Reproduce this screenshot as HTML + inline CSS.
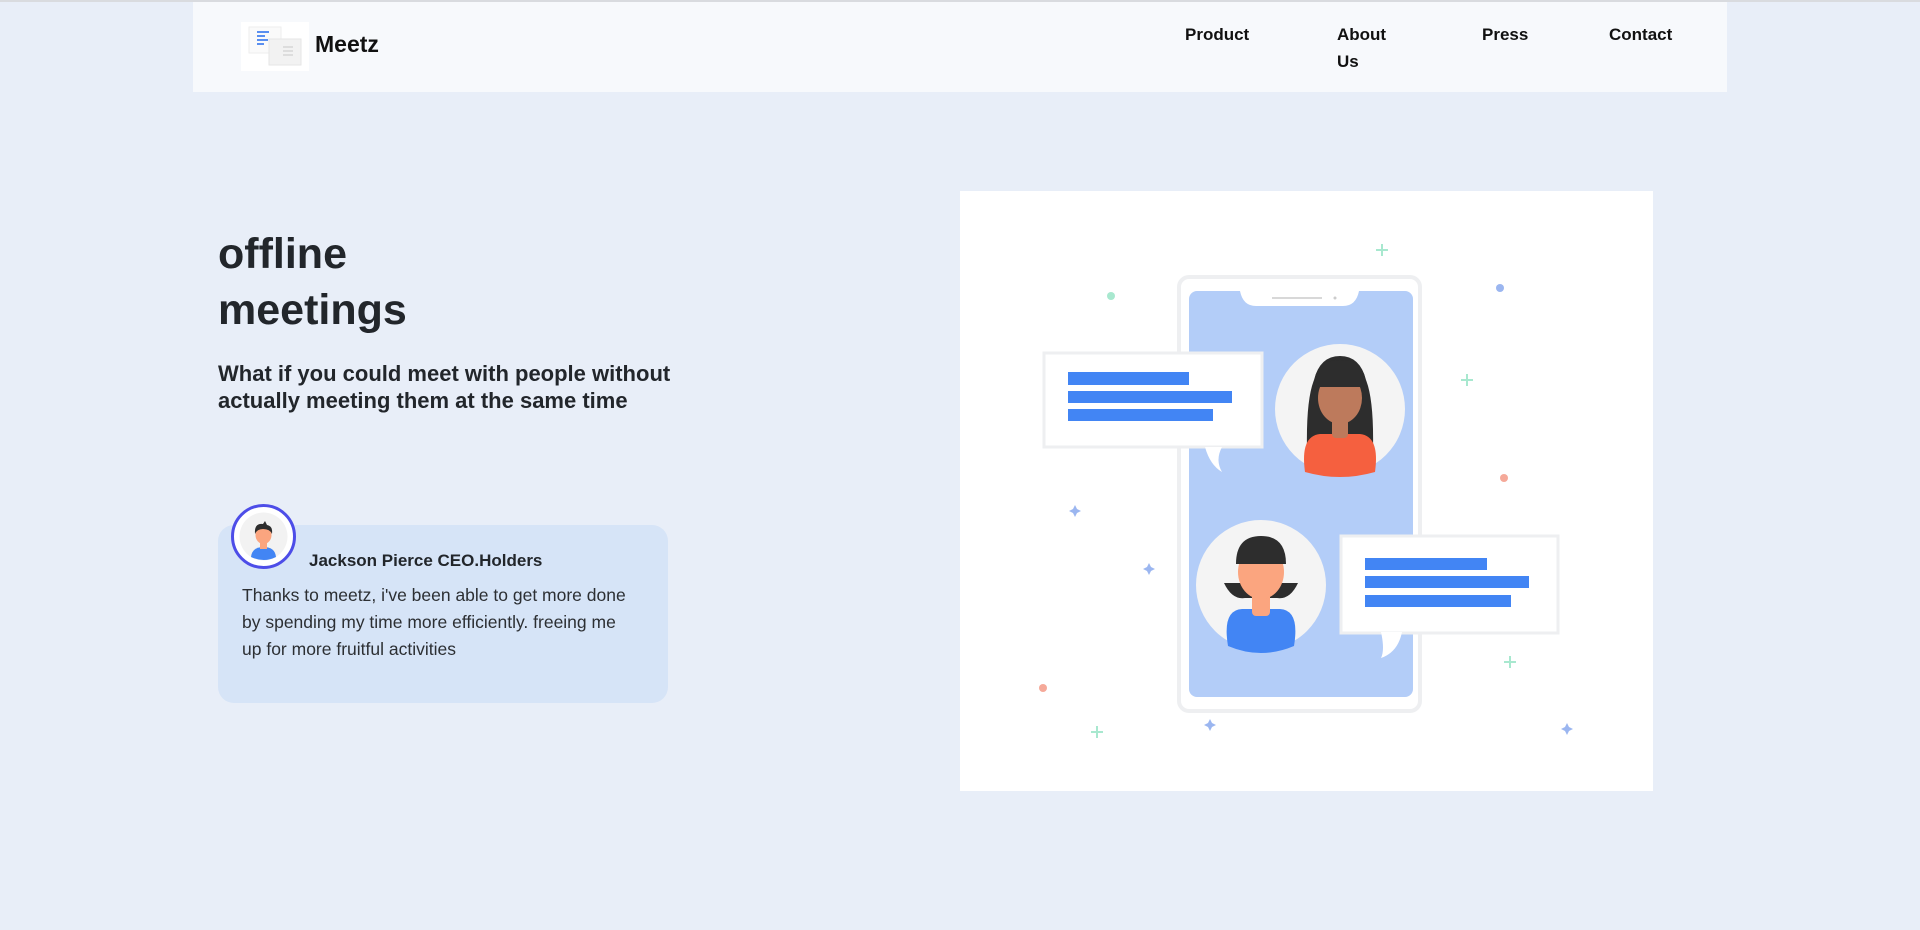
<!DOCTYPE html>
<html><head><meta charset="utf-8"><style>
*{margin:0;padding:0;box-sizing:border-box}
body{width:1920px;height:930px;background:#e8eef8;font-family:"Liberation Sans",sans-serif;position:relative;overflow:hidden;color:#1f2329}
.topline{position:absolute;left:0;top:0;width:1920px;height:2px;background:#d9dbdf}
header{position:absolute;left:193px;top:2px;width:1534px;height:90px;background:#f7f9fc}
.logo{position:absolute;left:48px;top:20px;width:68px;height:49px;background:#fff}
.brand{position:absolute;left:122px;top:29px;font-size:23px;font-weight:bold;color:#111}
.nav{position:absolute;top:19px;font-size:17px;font-weight:bold;color:#111;line-height:27px}
h1{position:absolute;left:218px;top:226px;font-size:43px;font-weight:bold;line-height:56px;color:#22262b}
.sub{position:absolute;left:218px;top:360px;font-size:22px;font-weight:bold;line-height:27px;color:#22262b}
.card{position:absolute;left:218px;top:525px;width:450px;height:178px;background:#d6e4f7;border-radius:16px}
.av{position:absolute;left:231px;top:504px;width:65px;height:65px;border-radius:50%;border:3px solid #4d4de8;background:#fff;overflow:hidden}
.name{position:absolute;left:309px;top:551px;font-size:17px;font-weight:bold;color:#22262b}
.quote{position:absolute;left:242px;top:582px;width:396px;font-size:17.5px;line-height:27px;color:#2c2f33}
.panel{position:absolute;left:960px;top:191px;width:693px;height:600px;background:#fff}
</style></head><body>
<div class="topline"></div>
<header>
<div class="logo"><svg width="68" height="49" viewBox="0 0 68 49">
<rect x="8" y="5" width="32" height="26" fill="#fafafa" stroke="#eee"/>
<rect x="28" y="17" width="32" height="26" fill="#f2f2f2" stroke="#e6e6e6"/>
<rect x="16" y="9" width="12" height="2" fill="#5a8ff0"/><rect x="16" y="13" width="8" height="2" fill="#5a8ff0"/><rect x="16" y="17" width="11" height="2" fill="#5a8ff0"/><rect x="16" y="21" width="7" height="2" fill="#5a8ff0"/>
<rect x="42" y="24" width="10" height="2" fill="#ddd"/><rect x="42" y="28" width="10" height="2" fill="#ddd"/><rect x="42" y="32" width="10" height="2" fill="#ddd"/>
</svg></div>
<div class="brand">Meetz</div>
<div class="nav" style="left:992px">Product</div>
<div class="nav" style="left:1144px">About<br>Us</div>
<div class="nav" style="left:1289px">Press</div>
<div class="nav" style="left:1416px">Contact</div>
</header>
<h1>offline<br>meetings</h1>
<div class="sub">What if you could meet with people without<br>actually meeting them at the same time</div>
<div class="card"></div>
<div class="av"><svg width="59" height="59" viewBox="0 0 59 59">
<circle cx="29.5" cy="29.5" r="24" fill="#f2f2f2"/>
<path d="M17 50 Q18 40 29.5 40 Q41 40 42 50 Q30 56 17 50Z" fill="#4285f4"/>
<rect x="26" y="34" width="7" height="8" fill="#fba57f"/>
<ellipse cx="29.5" cy="28" rx="8" ry="9" fill="#fba57f"/>
<path d="M21 27 Q20 16 29 17 L31 14 L33 18 Q39 19 38 27 Q36 22 29 22 Q23 22 21 27Z" fill="#2d2d2d"/>
</svg></div>
<div class="name">Jackson Pierce CEO.Holders</div>
<div class="quote">Thanks to meetz, i've been able to get more done by spending my time more efficiently. freeing me up for more fruitful activities</div>
<div class="panel"><svg width="693" height="600" viewBox="960 191 693 600">
<rect x="1179" y="277" width="241" height="434" rx="10" fill="#fff" stroke="#eeeff1" stroke-width="4"/>
<rect x="1189" y="291" width="224" height="406" rx="8" fill="#b3cdf8"/>
<path d="M1240 291 Q1243 306 1256 306 L1343 306 Q1356 306 1359 291Z" fill="#fff"/>
<rect x="1272" y="297" width="50" height="2" fill="#d8d8d8"/><circle cx="1335" cy="298" r="1.5" fill="#ccc"/>
<rect x="1044" y="353" width="218" height="94" fill="#fff" stroke="#eeeff1" stroke-width="3"/>
<path d="M1205 447 Q1210 465 1222 472 Q1215 460 1222 447Z" fill="#fff"/>
<rect x="1068" y="372" width="121" height="13" fill="#4285f4"/>
<rect x="1068" y="391" width="164" height="12" fill="#4285f4"/>
<rect x="1068" y="409" width="145" height="12" fill="#4285f4"/>
<circle cx="1340" cy="409" r="65" fill="#f4f4f4"/>
<path d="M1307 450 Q1306 400 1314 380 Q1320 356 1340 356 Q1360 356 1366 380 Q1374 400 1373 450Z" fill="#2d2d2d"/>
<path d="M1305 472 Q1300 436 1320 434 L1360 434 Q1380 436 1375 472 Q1340 482 1305 472Z" fill="#f5603f"/>
<rect x="1332" y="418" width="16" height="20" rx="4" fill="#bd7a5c"/>
<ellipse cx="1340" cy="398" rx="22" ry="26" fill="#bd7a5c"/>
<path d="M1314 387 Q1314 360 1340 360 Q1366 360 1366 387Z" fill="#2d2d2d"/>
<circle cx="1261" cy="585" r="65" fill="#f4f4f4"/>
<path d="M1224 583 Q1232 600 1245 598 L1277 598 Q1290 600 1298 583Z" fill="#2d2d2d"/>
<path d="M1228 646 Q1222 610 1242 609 L1280 609 Q1300 610 1294 646 Q1261 660 1228 646Z" fill="#4285f4"/>
<rect x="1252" y="590" width="18" height="26" rx="4" fill="#fba57f"/>
<ellipse cx="1261" cy="572" rx="23" ry="27" fill="#fba57f"/>
<path d="M1236 564 Q1236 536 1261 536 Q1286 536 1286 564Z" fill="#2d2d2d"/>
<rect x="1341" y="536" width="217" height="97" fill="#fff" stroke="#eeeff1" stroke-width="3"/>
<path d="M1381 632 Q1385 650 1381 658 Q1398 652 1402 632Z" fill="#fff"/>
<rect x="1365" y="558" width="122" height="12" fill="#4285f4"/>
<rect x="1365" y="576" width="164" height="12" fill="#4285f4"/>
<rect x="1365" y="595" width="146" height="12" fill="#4285f4"/>
<g fill="none" stroke="#a8e8cf" stroke-width="2">
<path d="M1382 244v12M1376 250h12"/><path d="M1467 374v12M1461 380h12"/><path d="M1510 656v12M1504 662h12"/><path d="M1097 726v12M1091 732h12"/>
</g>
<circle cx="1111" cy="296" r="4" fill="#a8e8cf"/>
<circle cx="1500" cy="288" r="4" fill="#9bb6f0"/>
<circle cx="1504" cy="478" r="4" fill="#f5a999"/>
<circle cx="1043" cy="688" r="4" fill="#f5a999"/>
<g fill="#9bb6f0">
<path d="M1075 505 L1077 509 L1081 511 L1077 513 L1075 517 L1073 513 L1069 511 L1073 509Z"/>
<path d="M1149 563 L1151 567 L1155 569 L1151 571 L1149 575 L1147 571 L1143 569 L1147 567Z"/>
<path d="M1210 719 L1212 723 L1216 725 L1212 727 L1210 731 L1208 727 L1204 725 L1208 723Z"/>
<path d="M1567 723 L1569 727 L1573 729 L1569 731 L1567 735 L1565 731 L1561 729 L1565 727Z"/>
</g>
</svg></div>
</body></html>
